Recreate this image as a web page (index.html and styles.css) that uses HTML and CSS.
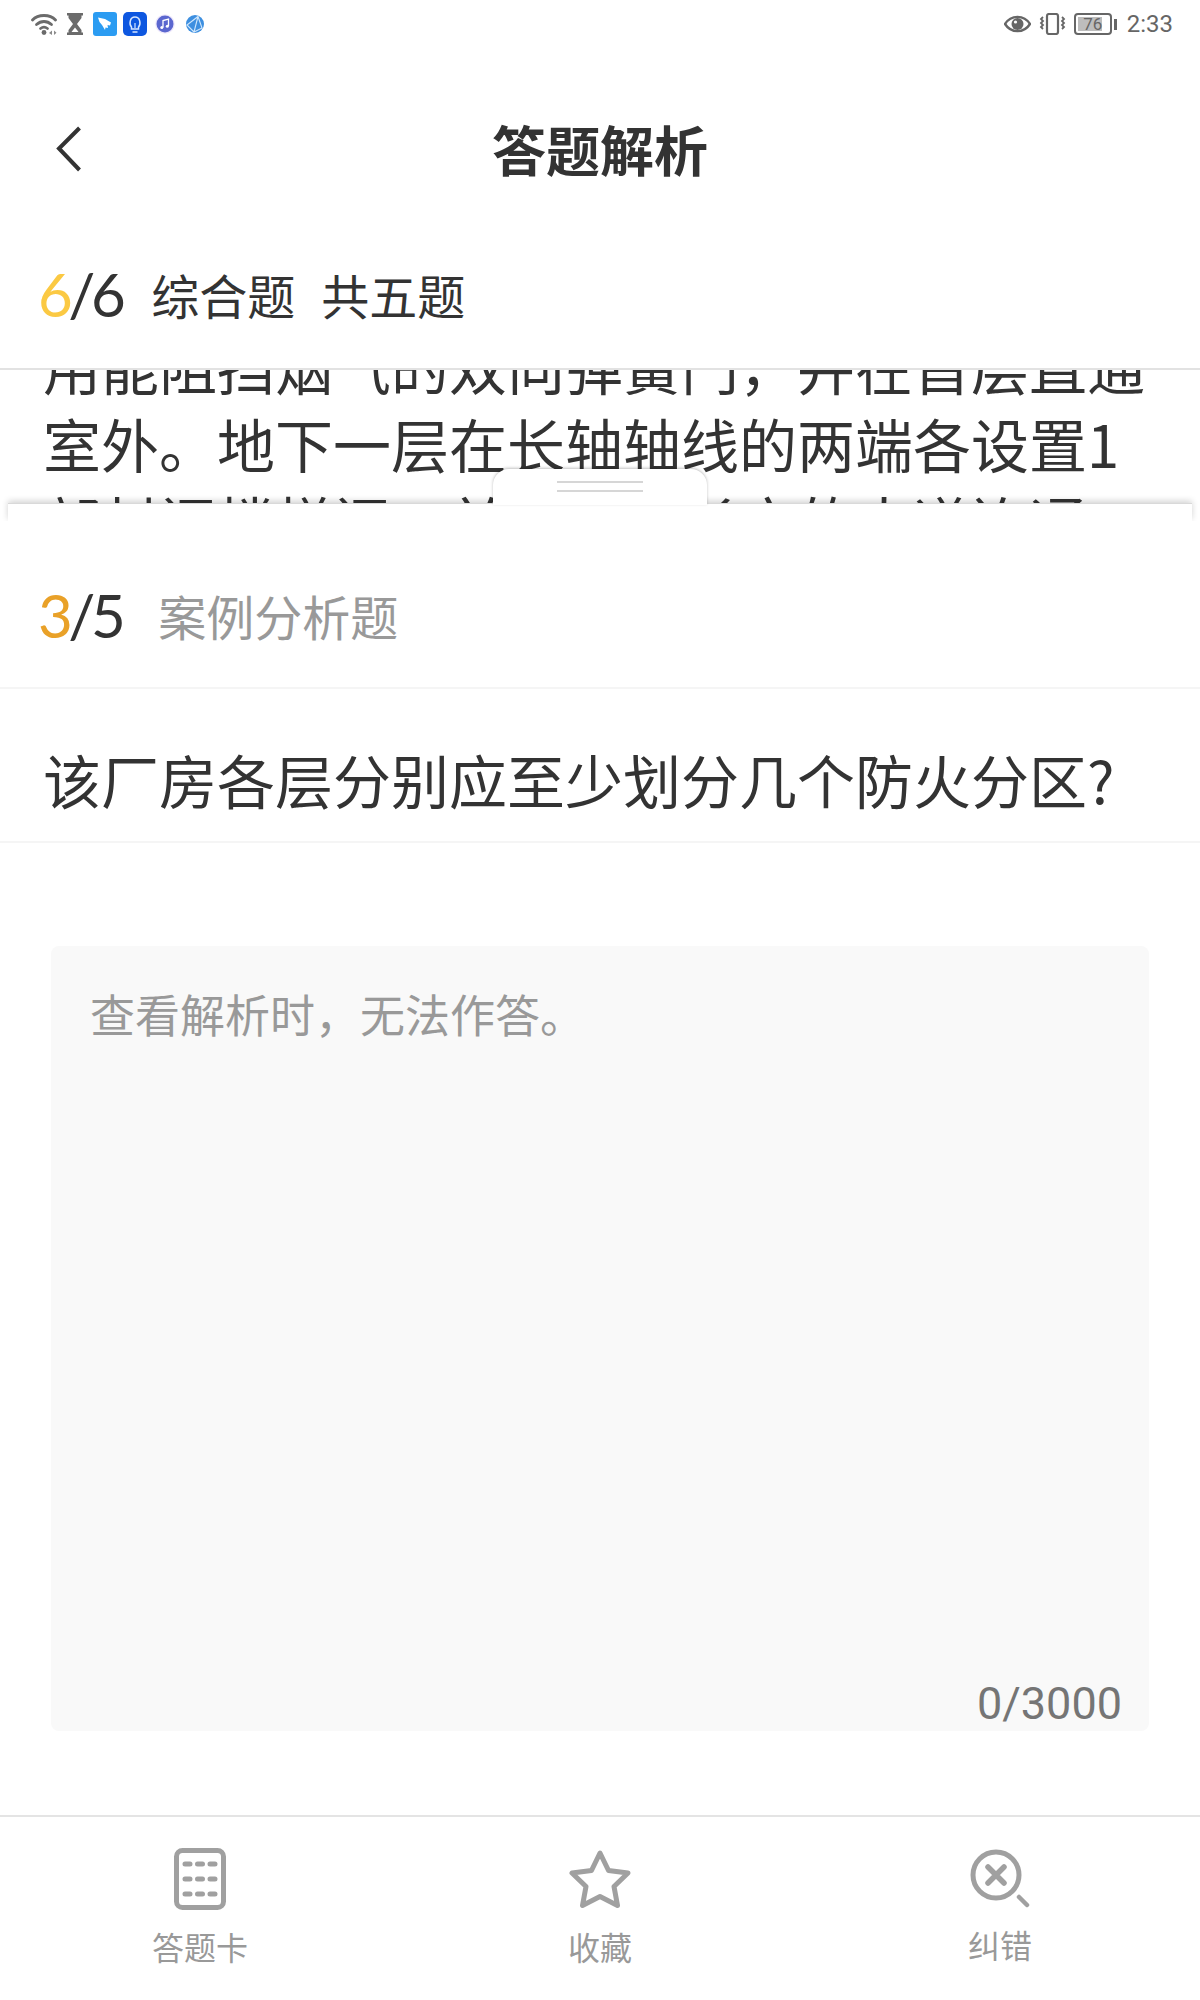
FILE: index.html
```html
<!DOCTYPE html>
<html lang="zh-CN">
<head>
    <meta charset="UTF-8">
    <meta name="viewport" content="width=device-width, initial-scale=1.0">
    <title>答题解析</title>
    <link rel="stylesheet" href="styles.css">
</head>
<body>
    <div class="status-bar">
        <div class="status-icons">
            <svg class="ic-wifi" width="26" height="22" viewBox="0 0 26 22" fill="none" stroke="#6b6b6b" stroke-width="2.800" stroke-linecap="round">
                <path d="M1.500 7C7 1 19 1 24.500 7"/>
                <path d="M5.500 11.500C10 7.500 16 7.500 20.500 11.500"/>
                <path d="M9.500 15.500C11.500 14 14.500 14 16.500 15.500"/>
                <circle cx="13" cy="19.500" r="2.400" fill="#6b6b6b" stroke="none"/>
                <path d="M21 17.500l-3 2.500 3 2zM23 17.500v4.500l2.500-2.200z" fill="#8a8a8a" stroke="none"/>
            </svg>
            <svg class="ic-glass" width="16" height="22" viewBox="0 0 16 22">
                <path d="M0 0h16v2.500h-1.500v2.500L10 11l4.500 6v2.500H16V22H0v-2.500h1.500V17L6 11 1.500 5V2.500H0z" fill="#6b6b6b"/>
                <path d="M4.500 19l3.500-4.500 3.500 4.500z" fill="#fff"/>
            </svg>
            <svg width="24" height="24" viewBox="0 0 24 24">
                <rect width="24" height="24" rx="3" fill="#2b9cf2"/>
                <path d="M5 5.500l7 1.500 6 3.500-1 3-2.500-.5.500 3-2.500-.5-.500 2.500L9 13 6.500 10z" fill="#fff"/>
            </svg>
            <svg class="ic-bulb" width="24" height="24" viewBox="0 0 24 24">
                <rect width="24" height="24" rx="5" fill="#0e57e0"/>
                <path d="M8.500 15C6 12.500 6.500 5 12 5s6 7.500 3.500 10v2h-7zM9.500 20h5" fill="none" stroke="#d6e6ff" stroke-width="1.500"/>
                <path d="M12 11v5" stroke="#d6e6ff" stroke-width="1.200"/>
            </svg>
            <svg class="ic-music" width="20" height="20" viewBox="0 0 20 20">
                <circle cx="10" cy="10" r="9.800" fill="#efe9fb"/>
                <circle cx="10" cy="10" r="8.500" fill="#5b67cf"/>
                <path d="M8 13.500V6.500l5.500-1.500v7" fill="none" stroke="#fff" stroke-width="1.300"/>
                <circle cx="6.800" cy="13.500" r="1.500" fill="#fff"/>
                <circle cx="12.300" cy="12.300" r="1.500" fill="#fff"/>
            </svg>
            <svg width="20" height="20" viewBox="0 0 20 20">
                <circle cx="10" cy="10" r="9" fill="#3d8fe0"/>
                <path d="M2 11L13 2.500 17 14 9 18zM13 2.500L9 18" fill="none" stroke="#cfe6fb" stroke-width="1.100"/>
            </svg>
        </div>
        <div class="status-right">
            <svg width="27" height="18" viewBox="0 0 27 18">
                <path d="M1 9C7-.5 20-.5 26 9 20 18.500 7 18.500 1 9z" fill="none" stroke="#666" stroke-width="2.400"/>
                <circle cx="13.500" cy="9" r="6" fill="#666"/>
                <circle cx="11.500" cy="7" r="1.600" fill="#fff"/>
            </svg>
            <svg width="27" height="22" viewBox="0 0 27 22" fill="none" stroke="#666" stroke-width="2.200">
                <rect x="8" y="1" width="11" height="20" rx="2"/>
                <path d="M4 4l-2 2 2 2-2 2 2 2-2 2 2 2M23 4l2 2-2 2 2 2-2 2 2 2-2 2" stroke-width="1.800"/>
            </svg>
            <div class="battery">
                <div class="battery-body"><span class="battery-level"></span><span class="battery-num">76</span></div>
                <span class="battery-cap"></span>
            </div>
            <span class="clock">2:33</span>
        </div>
    </div>

    <div class="nav-bar">
        <svg class="back" width="26" height="46" viewBox="0 0 26 46" fill="none" stroke="#333" stroke-width="4">
            <path d="M23.500 2L3 22.500 23.500 44"/>
        </svg>
        <h1>答题解析</h1>
    </div>

    <div class="paper-info">
        <span class="count"><em class="yellow">6</em>/6</span>
        <span class="paper-name">综合题</span>
        <span class="paper-name">共五题</span>
    </div>

    <!-- material text scrolled under the header -->
    <div class="material">
        <p>用能阻挡烟气的双向弹簧门&#xFF0C;并在首层直通室外。地下一层在长轴轴线的两端各设置1部封闭楼梯间&#xFF0C;并与首层长方的大道连通</p>
    </div>

    <div class="sheet">
        <div class="sheet-edge"></div>
        <div class="sheet-tab"><span></span><span></span></div>
        <div class="question-head">
            <span class="count"><em class="orange">3</em>/5</span>
            <span class="question-type">案例分析题</span>
        </div>
        <div class="question-title">该厂房各层分别应至少划分几个防火分区?</div>
        <div class="answer-box">
            <div class="placeholder">查看解析时&#xFF0C;无法作答。</div>
            <div class="counter">0/3000</div>
        </div>
    </div>

    <div class="tab-bar">
        <div class="tab-item">
            <svg width="52" height="62" viewBox="0 0 52 62" fill="none" stroke="#a0a0a0">
                <rect x="2.500" y="2.500" width="47" height="57" rx="6" stroke-width="5"/>
                <path d="M11 16h5M23.500 16h5M36 16h5M11 31h5M23.500 31h5M36 31h5M11 46h5M23.500 46h5M36 46h5" stroke-width="5" stroke-linecap="round"/>
            </svg>
            <span>答题卡</span>
        </div>
        <div class="tab-item">
            <svg width="62" height="58" viewBox="0 0 62 58" fill="none" stroke="#a0a0a0" stroke-width="5" stroke-linejoin="round">
                <path d="M31 3l8.500 17.500 19.500 2.500-14 13.500 3.500 19L31 46.500 13.500 55.500l3.500-19L3 23l19.500-2.500z"/>
            </svg>
            <span>收藏</span>
        </div>
        <div class="tab-item tab-item-last">
            <svg width="60" height="60" viewBox="0 0 60 60" fill="none" stroke="#a0a0a0" stroke-width="5" stroke-linecap="round">
                <circle cx="26" cy="26" r="23"/>
                <path d="M18 18l16 16M34 18L18 34" stroke-width="5.500"/>
                <path d="M49 48l8 8" stroke-width="4.500"/>
            </svg>
            <span>纠错</span>
        </div>
    </div>
</body>
</html>
```

FILE: styles.css
```css
* {
    box-sizing: border-box;
}
body {
    margin: 0;
    width: 1200px;
    height: 2000px;
    overflow: hidden;
    background: #fff;
    color: #333;
    font-family: "Noto Sans CJK SC", "Noto Sans", sans-serif;
}

/* status bar */
.status-bar {
    height: 48px;
    padding: 12px 27px 0 31px;
    display: flex;
    justify-content: space-between;
    align-items: flex-start;
}
.status-icons {
    display: flex;
    align-items: center;
    height: 24px;
    gap: 6px;
}
.status-icons .ic-wifi,
.status-icons .ic-glass,
.status-icons .ic-music {
    margin-right: 4px;
}
.status-icons .ic-bulb {
    margin-right: 2px;
}
.status-right {
    display: flex;
    align-items: center;
    height: 24px;
    gap: 8px;
    color: #666;
}
.battery {
    display: flex;
    align-items: center;
    gap: 2px;
}
.battery-body {
    position: relative;
    width: 38px;
    height: 22px;
    border: 2px solid #666;
    border-radius: 4px;
    display: flex;
    align-items: center;
    justify-content: center;
}
.battery-level {
    position: absolute;
    left: 2px;
    top: 2px;
    bottom: 2px;
    width: 24px;
    background: #bdbdbd;
}
.battery-num {
    position: relative;
    font-family: Roboto, sans-serif;
    font-size: 17px;
    line-height: 1;
}
.battery-cap {
    width: 3px;
    height: 11px;
    background: #666;
}
.clock {
    font-family: Roboto, sans-serif;
    font-size: 24px;
    line-height: 24px;
    margin-left: 2px;
}

/* title */
.nav-bar {
    position: relative;
    height: 208px;
    padding-bottom: 6px;
    display: flex;
    align-items: center;
    justify-content: center;
}
.nav-bar h1 {
    margin: 0;
    font-size: 54px;
    font-weight: 700;
    line-height: 72px;
}
.back {
    position: absolute;
    left: 56px;
    top: 78px;
}

.count {
    font-family: Lato, sans-serif;
    font-size: 60px;
    line-height: 1;
    letter-spacing: -4.500px;
    margin-left: -2px;
    color: #333;
}
.count em {
    font-style: normal;
}
.yellow {
    color: #fbc943;
}
.orange {
    color: #e9a128;
}

.paper-info {
    height: 114px;
    padding: 0 0 36px 40px;
    display: flex;
    align-items: center;
    border-bottom: 2px solid #e2e2e2;
}
.paper-name {
    font-size: 48px;
    line-height: 60px;
    margin-left: 26px;
}
.count + .paper-name {
    margin-left: 30px;
}

.material {
    height: 134px;
    overflow: hidden;
    padding: 0 43px;
}
.material p {
    margin: -44px 0 0;
    font-size: 58px;
    line-height: 78px;
}

/* answer sheet pulled up over the material */
.sheet {
    position: relative;
    height: 1310px;
    background: #fff;
}
.sheet-edge {
    position: absolute;
    left: 8px;
    right: 8px;
    top: -1px;
    height: 18px;
    border-top: 1px solid #d9d9d9;
    box-shadow: 0 -2px 6px rgba(0, 0, 0, 0.18);
    background: #fff;
    clip-path: inset(-10px -10px 0 -10px);
}
.sheet-tab {
    position: absolute;
    left: 493px;
    top: -35px;
    width: 214px;
    height: 36px;
    background: #fff;
    border-radius: 16px 16px 0 0;
    box-shadow: 0 -1px 3px rgba(0, 0, 0, 0.25);
    padding-top: 12px;
}
.sheet-tab span {
    display: block;
    width: 86px;
    height: 2px;
    margin: 0 auto 7px;
    background: #d6d6d6;
}
.question-head {
    position: relative;
    height: 185px;
    padding: 38px 0 0 40px;
    display: flex;
    align-items: center;
    border-bottom: 2px solid #f5f5f5;
}
.question-type {
    font-size: 48px;
    line-height: 60px;
    color: #999;
    margin-left: 37px;
}
.question-title {
    height: 154px;
    padding: 28px 43px 0;
    display: flex;
    align-items: center;
    font-size: 58px;
    border-bottom: 2px solid #f5f5f5;
}
.answer-box {
    position: relative;
    height: 785px;
    margin: 103px 51px 0;
    padding: 37px 39px 0;
    background: #f9f9f9;
    border-radius: 8px;
}
.placeholder {
    font-size: 45px;
    line-height: 62px;
    color: #999;
}
.counter {
    position: absolute;
    right: 27px;
    bottom: -2px;
    font-family: Roboto, sans-serif;
    font-size: 45px;
    line-height: 58px;
    color: #757575;
}

/* bottom actions */
.tab-bar {
    position: absolute;
    left: 0;
    right: 0;
    top: 1815px;
    height: 185px;
    background: #fff;
    border-top: 2px solid #e4e4e4;
    display: grid;
    grid-template-columns: repeat(3, 1fr);
    padding-top: 31px;
}
.tab-item {
    display: flex;
    flex-direction: column;
    align-items: center;
    gap: 13px;
    color: #999;
    font-size: 32px;
    line-height: 46px;
}
.tab-item-last {
    gap: 11px;
}
.tab-item svg {
    height: 62px;
}
```
